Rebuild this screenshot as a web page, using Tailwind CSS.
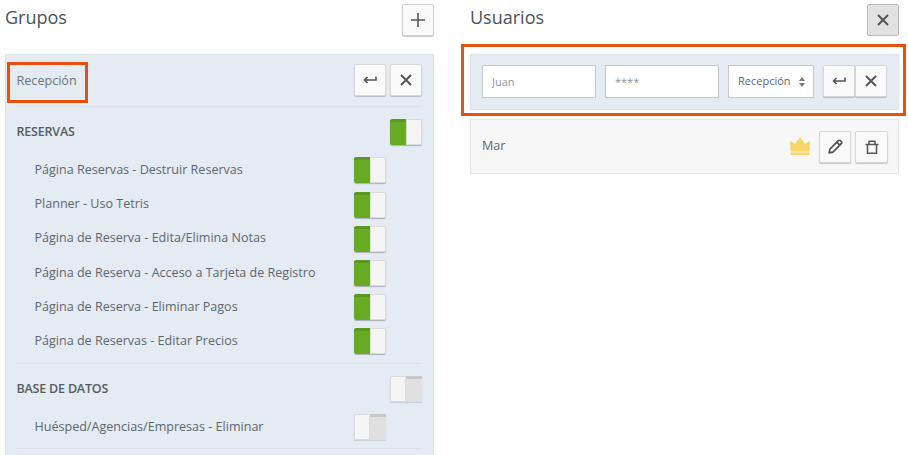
<!DOCTYPE html>
<html lang="es">
<head>
    <meta charset="UTF-8">
    <title>Grupos y Usuarios</title>
    <script src="https://cdn.jsdelivr.net/npm/@tailwindcss/browser@4"></script>
</head>
<body class="relative h-[455px] w-[908px] overflow-hidden bg-white font-['Open_Sans',sans-serif] text-[#5e6770]">
    <div class="flex items-start pl-[5px] pt-1">
        <!-- Grupos -->
        <div class="w-[429px] shrink-0">
            <div class="flex h-[50px] items-start justify-between">
                <h2 class="text-[18px] leading-[26px] text-[#4a525a]">Grupos</h2>
                <button class="flex h-8 w-8 items-center justify-center rounded-[2px] border border-[#d0d0d0] bg-[#fafafa] shadow-[0_1px_1px_rgba(0,0,0,0.2)]">
                    <svg class="h-4 w-4" viewBox="0 0 16 16" fill="none" stroke="#555" stroke-width="1.6"><path d="M8 1v14M1 8h14"/></svg>
                </button>
            </div>
            <div class="h-[420px] border border-[#dde3ea] bg-[#e4ebf3] px-[11px]">
                <div class="flex h-[52px] items-center justify-between border-b border-[#dbe2ea] pb-[1px]">
                    <span class="-ml-[0.5px] mt-[3px] text-[12.6px] text-[#6b747d]">Recepción</span>
                    <div class="flex gap-1">
                        <button class="flex h-8 w-8 items-center justify-center rounded-[2px] border border-[#d8d8d8] bg-[#fafafa] shadow-[0_1px_1px_rgba(0,0,0,0.2)]">
                            <svg class="h-3 w-[14px]" viewBox="0 0 14 12" fill="none" stroke="#555" stroke-width="1.6"><path d="M13 2.5v3.5H1.5M4.5 3L1.5 6l3 3"/></svg>
                        </button>
                        <button class="flex h-8 w-8 items-center justify-center rounded-[2px] border border-[#d8d8d8] bg-[#fafafa] shadow-[0_1px_1px_rgba(0,0,0,0.2)]">
                            <svg class="h-3 w-3" viewBox="0 0 12 12" fill="none" stroke="#555" stroke-width="2"><path d="M1 1l10 10M11 1L1 11"/></svg>
                        </button>
                    </div>
                </div>

                <div class="flex h-[46.3px] items-center justify-between pt-[3px]">
                    <span class="-ml-[0.5px] mt-[2px] text-[12.5px] font-semibold tracking-[-0.2px] text-[#555d65]">RESERVAS</span>
                    <div class="flex h-[26px] w-8 rounded-[2px] shadow-[0_1px_1px_rgba(0,0,0,0.25)]">
                        <div class="w-4 rounded-l-[2px] border-t-[3px] border-[#5a9a1e] bg-[#67ab25]"></div>
                        <div class="w-4 rounded-r-[2px] border border-[#dcdcdc] bg-[#f5f5f5]"></div>
                    </div>
                </div>

                <div class="border-b border-[#dbe2ea] pb-[4.7px]">
                    <div class="flex h-[34.2px] items-center justify-between pl-[17.5px] pr-9 text-[12.55px]">
                        <span>Página Reservas - Destruir Reservas</span>
                        <div class="flex h-[26px] w-8 rounded-[2px] shadow-[0_1px_1px_rgba(0,0,0,0.25)]">
                            <div class="w-4 rounded-l-[2px] border-t-[3px] border-[#5a9a1e] bg-[#67ab25]"></div>
                            <div class="w-4 rounded-r-[2px] border border-[#dcdcdc] bg-[#f5f5f5]"></div>
                        </div>
                    </div>
                    <div class="flex h-[34.2px] items-center justify-between pl-[17.5px] pr-9 text-[12.55px]">
                        <span>Planner - Uso Tetris</span>
                        <div class="flex h-[26px] w-8 rounded-[2px] shadow-[0_1px_1px_rgba(0,0,0,0.25)]">
                            <div class="w-4 rounded-l-[2px] border-t-[3px] border-[#5a9a1e] bg-[#67ab25]"></div>
                            <div class="w-4 rounded-r-[2px] border border-[#dcdcdc] bg-[#f5f5f5]"></div>
                        </div>
                    </div>
                    <div class="flex h-[34.2px] items-center justify-between pl-[17.5px] pr-9 text-[12.55px]">
                        <span>Página de Reserva - Edita/Elimina Notas</span>
                        <div class="flex h-[26px] w-8 rounded-[2px] shadow-[0_1px_1px_rgba(0,0,0,0.25)]">
                            <div class="w-4 rounded-l-[2px] border-t-[3px] border-[#5a9a1e] bg-[#67ab25]"></div>
                            <div class="w-4 rounded-r-[2px] border border-[#dcdcdc] bg-[#f5f5f5]"></div>
                        </div>
                    </div>
                    <div class="flex h-[34.2px] items-center justify-between pl-[17.5px] pr-9 text-[12.55px]">
                        <span>Página de Reserva - Acceso a Tarjeta de Registro</span>
                        <div class="flex h-[26px] w-8 rounded-[2px] shadow-[0_1px_1px_rgba(0,0,0,0.25)]">
                            <div class="w-4 rounded-l-[2px] border-t-[3px] border-[#5a9a1e] bg-[#67ab25]"></div>
                            <div class="w-4 rounded-r-[2px] border border-[#dcdcdc] bg-[#f5f5f5]"></div>
                        </div>
                    </div>
                    <div class="flex h-[34.2px] items-center justify-between pl-[17.5px] pr-9 text-[12.55px]">
                        <span>Página de Reserva - Eliminar Pagos</span>
                        <div class="flex h-[26px] w-8 rounded-[2px] shadow-[0_1px_1px_rgba(0,0,0,0.25)]">
                            <div class="w-4 rounded-l-[2px] border-t-[3px] border-[#5a9a1e] bg-[#67ab25]"></div>
                            <div class="w-4 rounded-r-[2px] border border-[#dcdcdc] bg-[#f5f5f5]"></div>
                        </div>
                    </div>
                    <div class="flex h-[34.2px] items-center justify-between pl-[17.5px] pr-9 text-[12.55px]">
                        <span>Página de Reservas - Editar Precios</span>
                        <div class="flex h-[26px] w-8 rounded-[2px] shadow-[0_1px_1px_rgba(0,0,0,0.25)]">
                            <div class="w-4 rounded-l-[2px] border-t-[3px] border-[#5a9a1e] bg-[#67ab25]"></div>
                            <div class="w-4 rounded-r-[2px] border border-[#dcdcdc] bg-[#f5f5f5]"></div>
                        </div>
                    </div>
                </div>

                <div class="flex h-[47px] items-center justify-between pt-[3px]">
                    <span class="-ml-[0.5px] text-[12.5px] font-semibold tracking-[-0.2px] text-[#555d65]">BASE DE DATOS</span>
                    <div class="flex h-[26px] w-8 shadow-[0_1px_1px_rgba(0,0,0,0.1)]">
                        <div class="w-4 rounded-l-[2px] border border-[#dcdcdc] bg-[#f5f5f5]"></div>
                        <div class="w-4 border-t-[3px] border-[#c9c9c9] bg-[#e0e0e0]"></div>
                    </div>
                </div>
                <div class="border-b border-[#dbe2ea] pb-[5px]">
                    <div class="flex h-[32px] items-center justify-between pl-[17.5px] pr-9 text-[12.55px]">
                        <span>Huésped/Agencias/Empresas - Eliminar</span>
                        <div class="flex h-[26px] w-8 shadow-[0_1px_1px_rgba(0,0,0,0.1)]">
                            <div class="w-4 rounded-l-[2px] border border-[#dcdcdc] bg-[#f5f5f5]"></div>
                            <div class="w-4 border-t-[3px] border-[#c9c9c9] bg-[#e0e0e0]"></div>
                        </div>
                    </div>
                </div>
            </div>
        </div>

        <!-- Usuarios -->
        <div class="ml-9 w-[429px] shrink-0">
            <div class="flex h-[50px] items-start justify-between">
                <h2 class="text-[18px] leading-[26px] text-[#4a525a]">Usuarios</h2>
                <button class="flex h-8 w-8 items-center justify-center rounded-[2px] border border-[#bbb] bg-[#e2e2e2]">
                    <svg class="h-3 w-3" viewBox="0 0 12 12" fill="none" stroke="#555" stroke-width="2"><path d="M1 1l10 10M11 1L1 11"/></svg>
                </button>
            </div>
            <div class="flex h-[56px] items-start border border-[#dde3ea] bg-[#e4ebf3] pl-[11px] pt-[10px]">
                <input class="h-[33px] w-[114px] border border-[#c6c9cc] bg-white px-[9px] text-[11px] placeholder:text-[#8d949b]" placeholder="Juan">
                <input class="ml-[9px] h-[33px] w-[114px] border border-[#c6c9cc] bg-white px-[9px] text-[11px] placeholder:text-[#8d949b]" placeholder="****">
                <div class="ml-[9px] flex h-[33px] w-[86px] items-center justify-between border border-[#c6c9cc] bg-white pl-[9px] pr-[8px] text-[11px]">
                    <span>Recepción</span>
                    <svg class="h-[10px] w-[6px]" viewBox="0 0 6 10" fill="#777"><path d="M3 0l3 4H0zM3 10L0 6h6z"/></svg>
                </div>
                <button class="ml-[9px] flex h-8 w-8 items-center justify-center rounded-[2px] border border-[#d8d8d8] bg-[#fafafa] shadow-[0_1px_1px_rgba(0,0,0,0.2)]">
                    <svg class="h-3 w-[14px]" viewBox="0 0 14 12" fill="none" stroke="#555" stroke-width="1.6"><path d="M13 2.5v3.5H1.5M4.5 3L1.5 6l3 3"/></svg>
                </button>
                <button class="flex h-8 w-8 items-center justify-center rounded-[2px] border border-[#d8d8d8] bg-[#fafafa] shadow-[0_1px_1px_rgba(0,0,0,0.2)]">
                    <svg class="h-3 w-3" viewBox="0 0 12 12" fill="none" stroke="#555" stroke-width="2"><path d="M1 1l10 10M11 1L1 11"/></svg>
                </button>
            </div>
            <div class="mt-[9px] flex h-[55px] items-center border border-[#e6e6e6] bg-[#f7f7f7] pl-[11px] pr-[10px]">
                <span class="text-[12.6px]">Mar</span>
                <svg class="-mt-[2px] ml-auto h-[18px] w-5" viewBox="0 0 20 18" fill="#f8d668"><path d="M0 4l5 3 5-7 5 7 5-3-.6 10.500H.6z"/><path d="M.6 15.500h18.800V18H.6z"/></svg>
                <button class="ml-[9px] flex h-8 w-8 items-center justify-center rounded-[2px] border border-[#d8d8d8] bg-[#fafafa] shadow-[0_1px_1px_rgba(0,0,0,0.2)]">
                    <svg class="h-[15px] w-[15px]" viewBox="0 0 14 14" fill="none" stroke="#555" stroke-width="1.6" stroke-linejoin="round"><path d="M1 13l.8-3.6L9.6 1.6a1.4 1.4 0 0 1 2 0l.8.8a1.4 1.4 0 0 1 0 2l-7.8 7.8zM8.3 3l2.700 2.700"/></svg>
                </button>
                <button class="ml-1 flex h-8 w-[33px] items-center justify-center rounded-[2px] border border-[#d8d8d8] bg-[#fafafa] shadow-[0_1px_1px_rgba(0,0,0,0.2)]">
                    <svg class="h-[14px] w-[14px]" viewBox="0 0 14 14" fill="none" stroke="#555" stroke-width="1.5"><path d="M4 4.500V1.200h6v3.300M0.500 4.500h13M2.500 4.500v8.800h9V4.500"/></svg>
                </button>
            </div>
        </div>
    </div>

    <!-- annotation boxes over the screenshot -->
    <div class="absolute left-[7px] top-[62px] h-[41px] w-[81px] border-[3px] border-[#e8500f]"></div>
    <div class="absolute left-[461px] top-[44px] h-[72px] w-[445px] border-[3px] border-[#e8500f]"></div>
</body>
</html>
